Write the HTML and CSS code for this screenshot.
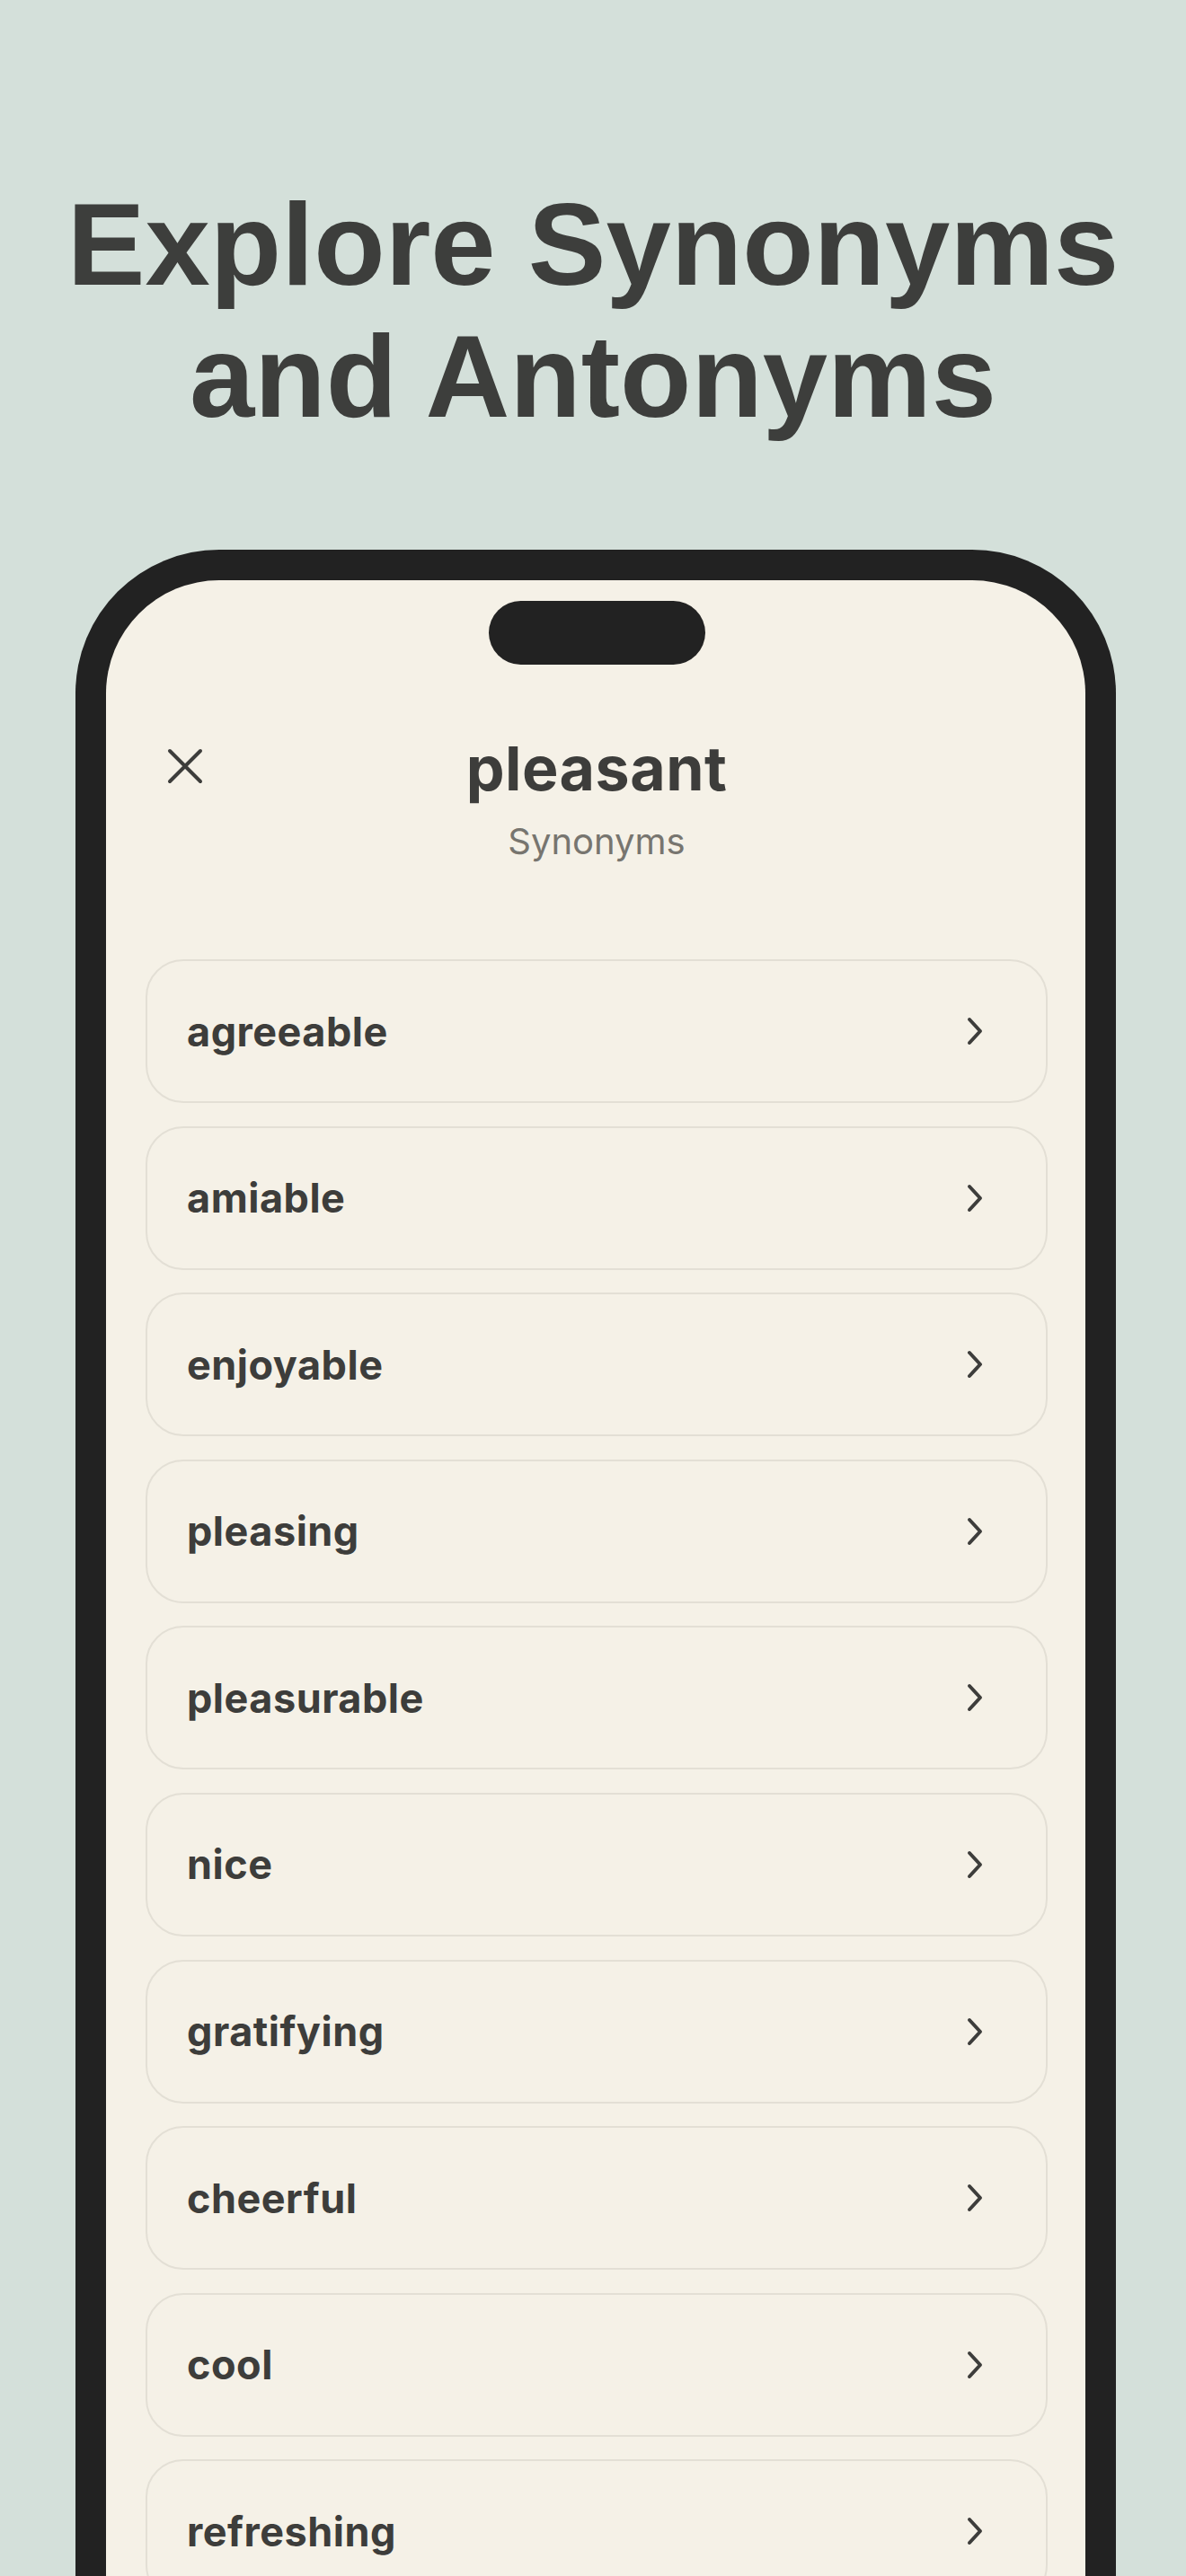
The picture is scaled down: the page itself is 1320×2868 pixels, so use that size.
FILE: index.html
```html
<!DOCTYPE html>
<html lang="en">
<head>
    <meta charset="UTF-8">
    <meta name="viewport" content="width=device-width, initial-scale=1.0">
    <title>Explore Synonyms and Antonyms</title>
    <link rel="stylesheet" href="styles.css">
</head>
<body>
    <h1 class="headline">Explore Synonyms<br/>and Antonyms</h1>

    <div class="phone">
      <div class="screen">
        <div class="island"></div>

        <div class="word-header">
          <button class="close-button" aria-label="Close">
            <svg width="40" height="40" viewBox="0 0 40 40">
              <path d="M3 3 L37 37 M37 3 L3 37" stroke="#3d3d3b" stroke-width="4" stroke-linecap="round" fill="none"/>
            </svg>
          </button>
          <div class="word-title">
            <h2>pleasant</h2>
            <p>Synonyms</p>
          </div>
          <div></div>
        </div>

        <ul class="word-list">
          <li>agreeable <span class="chevron"><svg width="20" height="34" viewBox="0 0 20 34"><path d="M4 4 L16 17 L4 30" stroke="#3d3d3b" stroke-width="4" stroke-linecap="round" stroke-linejoin="round" fill="none"/></svg></span></li>
          <li>amiable <span class="chevron"><svg width="20" height="34" viewBox="0 0 20 34"><path d="M4 4 L16 17 L4 30" stroke="#3d3d3b" stroke-width="4" stroke-linecap="round" stroke-linejoin="round" fill="none"/></svg></span></li>
          <li>enjoyable <span class="chevron"><svg width="20" height="34" viewBox="0 0 20 34"><path d="M4 4 L16 17 L4 30" stroke="#3d3d3b" stroke-width="4" stroke-linecap="round" stroke-linejoin="round" fill="none"/></svg></span></li>
          <li>pleasing <span class="chevron"><svg width="20" height="34" viewBox="0 0 20 34"><path d="M4 4 L16 17 L4 30" stroke="#3d3d3b" stroke-width="4" stroke-linecap="round" stroke-linejoin="round" fill="none"/></svg></span></li>
          <li>pleasurable <span class="chevron"><svg width="20" height="34" viewBox="0 0 20 34"><path d="M4 4 L16 17 L4 30" stroke="#3d3d3b" stroke-width="4" stroke-linecap="round" stroke-linejoin="round" fill="none"/></svg></span></li>
          <li>nice <span class="chevron"><svg width="20" height="34" viewBox="0 0 20 34"><path d="M4 4 L16 17 L4 30" stroke="#3d3d3b" stroke-width="4" stroke-linecap="round" stroke-linejoin="round" fill="none"/></svg></span></li>
          <li>gratifying <span class="chevron"><svg width="20" height="34" viewBox="0 0 20 34"><path d="M4 4 L16 17 L4 30" stroke="#3d3d3b" stroke-width="4" stroke-linecap="round" stroke-linejoin="round" fill="none"/></svg></span></li>
          <li>cheerful <span class="chevron"><svg width="20" height="34" viewBox="0 0 20 34"><path d="M4 4 L16 17 L4 30" stroke="#3d3d3b" stroke-width="4" stroke-linecap="round" stroke-linejoin="round" fill="none"/></svg></span></li>
          <li>cool <span class="chevron"><svg width="20" height="34" viewBox="0 0 20 34"><path d="M4 4 L16 17 L4 30" stroke="#3d3d3b" stroke-width="4" stroke-linecap="round" stroke-linejoin="round" fill="none"/></svg></span></li>
          <li>refreshing <span class="chevron"><svg width="20" height="34" viewBox="0 0 20 34"><path d="M4 4 L16 17 L4 30" stroke="#3d3d3b" stroke-width="4" stroke-linecap="round" stroke-linejoin="round" fill="none"/></svg></span></li>
        </ul>
      </div>
    </div>
</body>
</html>
```

FILE: styles.css
```css
html, body {
    margin: 0;
    height: 2868px;
    overflow: hidden;
}
body {
    background: #d4e0da;
    font-family: Inter, "Liberation Sans", sans-serif;
    color: #3d3d3b;
}
.headline {
    margin: 199px 0 0 0;
    text-align: center;
    font-family: "Liberation Sans", sans-serif;
    font-size: 130px;
    line-height: 147px;
    font-weight: 700;
    color: #3d3e3c;
}
.phone {
    width: 1090px;
    height: 2400px;
    margin: 119px 0 0 84px;
    padding: 34px 34px 0 34px;
    background: #222222;
    border-radius: 160px 160px 0 0;
}
.screen {
    height: 100%;
    padding: 23px 42px 0 44px;
    box-sizing: border-box;
    background: #f5f1e7;
    border-radius: 126px 126px 0 0;
}
.island {
    width: 241px;
    height: 71px;
    margin: 0 auto;
    background: #222222;
    border-radius: 36px;
}
.word-header {
    display: grid;
    grid-template-columns: 1fr auto 1fr;
    margin-top: 75px;
}
.close-button {
    justify-self: start;
    align-self: start;
    margin: 18px 0 0 24px;
    padding: 0;
    border: none;
    background: none;
    width: 40px;
    height: 40px;
}
.word-title {
    text-align: center;
}
.word-title h2 {
    margin: 0;
    font-size: 68px;
    line-height: 80px;
    font-weight: 700;
    letter-spacing: 0.5px;
}
.word-title p {
    margin: 19px 0 0 0;
    font-size: 40px;
    line-height: 46px;
    color: #77756f;
}
.word-list {
    list-style: none;
    margin: 108px 0 0 0;
    padding: 0;
    display: flex;
    flex-direction: column;
    gap: 25.6px;
}
.word-list li {
    display: flex;
    align-items: center;
    justify-content: space-between;
    height: 156px;
    padding: 0 69px 0 44px;
    border: 2px solid #e3dfd5;
    border-radius: 42px;
    font-size: 45px;
    font-weight: 700;
    letter-spacing: 0.5px;
}
.chevron {
    display: flex;
}
```
